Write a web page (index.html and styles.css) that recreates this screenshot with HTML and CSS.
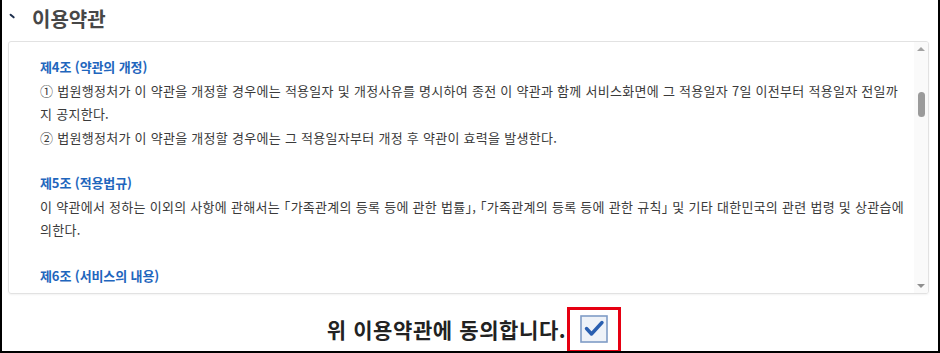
FILE: index.html
```html
<!DOCTYPE html>
<html lang="ko">
<head>
<meta charset="utf-8">
<title>이용약관</title>
<link rel="stylesheet" href="styles.css">
</head>
<body>
<div class="frame">
  <h2 class="title"><span class="tick"></span>이용약관</h2>
  <div class="terms-box">
    <div class="terms-content">
      <section class="article">
        <h3 class="article-title">제4조 (약관의 개정)</h3>
        <p>① 법원행정처가 이 약관을 개정할 경우에는 적용일자 및 개정사유를 명시하여 종전 이 약관과 함께 서비스화면에 그 적용일자 7일 이전부터 적용일자 전일까지 공지한다.</p>
        <p>② 법원행정처가 이 약관을 개정할 경우에는 그 적용일자부터 개정 후 약관이 효력을 발생한다.</p>
      </section>
      <section class="article">
        <h3 class="article-title">제5조 (적용법규)</h3>
        <p>이 약관에서 정하는 이외의 사항에 관해서는 <span class="br">「</span>가족관계의 등록 등에 관한 법률<span class="br">」</span>, <span class="br">「</span>가족관계의 등록 등에 관한 규칙<span class="br">」</span> 및 기타 대한민국의 관련 법령 및 상관습에 의한다.</p>
      </section>
      <section class="article">
        <h3 class="article-title">제6조 (서비스의 내용)</h3>
      </section>
    </div>
    <div class="scrollbar">
      <span class="arrow up"></span>
      <div class="track"><span class="thumb"></span></div>
      <span class="arrow down"></span>
    </div>
  </div>
  <div class="agree">
    <span class="agree-text">위 이용약관에 동의합니다.</span>
    <label class="check-wrap">
      <svg class="checkbox" width="28" height="28" viewBox="0 0 28 28">
        <rect x="1" y="1" width="26" height="26" fill="#eef2f8" stroke="#7f9cc6" stroke-width="1.6"/>
        <path d="M6.5 13.5 L11.5 19 L22 7.5" fill="none" stroke="#2a5fb0" stroke-width="3.4" stroke-linecap="round" stroke-linejoin="round"/>
      </svg>
    </label>
  </div>
</div>
</body>
</html>
```
FILE: styles.css
```css
* { box-sizing: border-box; }
html, body { margin: 0; padding: 0; background: #fff; }
body {
  font-family: "Noto Sans CJK KR", "Noto Sans", sans-serif;
  color: #333;
}
.frame {
  width: 940px;
  height: 353px;
  border: 2px solid #000;
  border-top: none;
  overflow: hidden;
  display: flex;
  flex-direction: column;
}
.title {
  margin: 0;
  flex-shrink: 0;
  height: 41px;
  display: flex;
  align-items: center;
  padding: 0 0 4px 7px;
  font-size: 20px;
  font-weight: 700;
  color: #474747;
  letter-spacing: 0;
}
.tick {
  width: 6px;
  height: 2.4px;
  background: #1d2f4d;
  border-radius: 1px;
  transform: rotate(40deg);
  margin: -4px 17px 0 0;
}
.terms-box {
  flex-shrink: 0;
  margin: 0 9px 0 6px;
  height: 253px;
  border: 1px solid #e2e2e2;
  border-radius: 3px;
  box-shadow: 0 1px 2px rgba(0,0,0,0.05);
  display: flex;
  overflow: hidden;
}
.terms-content {
  flex: 1;
  overflow: hidden;
  padding: 13px 10px 0 31px;
}
.article { margin-bottom: 22px; }
.article-title {
  margin: 0;
  font-size: 13px;
  line-height: 23.5px;
  font-weight: 700;
  color: #1f66bd;
  letter-spacing: -0.1px;
}
.article p {
  margin: 0;
  font-size: 13px;
  line-height: 23.5px;
  color: #3a3a3a;
  letter-spacing: 0.28px;
}
.br { font-feature-settings: "halt"; }
.scrollbar {
  width: 14px;
  flex-shrink: 0;
  display: flex;
  flex-direction: column;
  align-items: center;
  background: #fafafa;
  padding: 5px 0 5px;
}
.arrow {
  width: 0; height: 0;
  border-left: 4px solid transparent;
  border-right: 4px solid transparent;
}
.arrow.up { border-bottom: 4px solid #a3a3a3; margin-bottom: 4px; }
.arrow.down { border-top: 4px solid #8f8f8f; margin-top: 4px; }
.track {
  flex: 1;
  width: 100%;
  display: flex;
  justify-content: center;
  padding-top: 37px;
}
.thumb {
  width: 7px;
  height: 25px;
  border-radius: 4px;
  background: #9b9b9b;
}
.agree {
  flex: 1;
  min-height: 0;
  display: flex;
  justify-content: center;
  align-items: flex-start;
  padding: 13px 0 0 8px;
}
.agree-text {
  font-size: 21px;
  font-weight: 700;
  color: #222;
  line-height: 44px;
  letter-spacing: 0.6px;
  margin-right: 1px;
}
.check-wrap {
  flex-shrink: 0;
  width: 54px;
  height: 46px;
  border: 3px solid #e60012;
  display: flex;
  justify-content: center;
  align-items: center;
  padding-bottom: 2px;
}
.checkbox { display: block; }
```
